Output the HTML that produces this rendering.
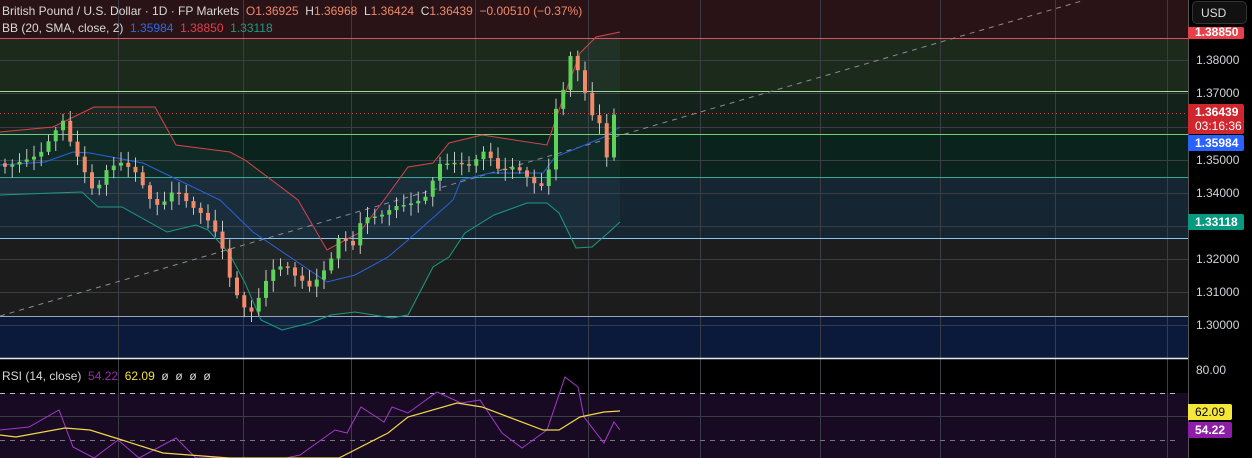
<!DOCTYPE html>
<html><head><meta charset="utf-8"><style>
html,body{margin:0;padding:0;background:#000;overflow:hidden}
body{width:1252px;height:458px;position:relative;font-family:"Liberation Sans",sans-serif}
svg{position:absolute;left:0;top:0}
.t{position:absolute;font-size:12px;color:#d8d8d8;white-space:nowrap}
.ax{position:absolute;left:1196px;font-size:12px;color:#d1d4dc}
.box{position:absolute;left:1188px;width:56px;height:16px;font-size:12px;color:#fff;text-align:left;padding-left:7px;box-sizing:border-box;line-height:16px;border-radius:0 2px 2px 0;font-weight:bold}
</style></head><body>
<svg id="s" width="1252" height="458" xmlns="http://www.w3.org/2000/svg">
<rect x="0" y="0" width="1188" height="38" fill="#2a1317"/>
<rect x="0" y="38" width="1188" height="53" fill="#1c2a1c"/>
<rect x="0" y="91" width="1188" height="43" fill="#13221a"/>
<rect x="0" y="134" width="1188" height="43" fill="#0b231d"/>
<rect x="0" y="177" width="1188" height="61" fill="#162532"/>
<rect x="0" y="238" width="1188" height="78" fill="#1c1c1d"/>
<rect x="0" y="316" width="1188" height="42" fill="#0b1a3a"/>
<rect x="0" y="360" width="1188" height="33" fill="#000"/>
<rect x="0" y="393" width="1188" height="65" fill="#170a22"/>
<rect x="1188" y="0" width="64" height="458" fill="#000"/>
<g id="grid" stroke="#3a3d44" stroke-width="1"></g>
<line x1="0" y1="38.5" x2="1188" y2="38.5" stroke="#e0505a"/>
<line x1="0" y1="91.5" x2="1188" y2="91.5" stroke="#9fe28a"/>
<line x1="0" y1="134.5" x2="1188" y2="134.5" stroke="#6ed27a"/>
<line x1="0" y1="177.5" x2="1188" y2="177.5" stroke="#3aa890"/>
<line x1="0" y1="238.5" x2="1188" y2="238.5" stroke="#8ec4f0"/>
<line x1="0" y1="316.5" x2="1188" y2="316.5" stroke="#a0a4ac"/>
<line x1="0" y1="113.5" x2="1188" y2="113.5" stroke="#e04040" stroke-dasharray="1,3"/>
<line x1="0" y1="316" x2="1085" y2="0" stroke="#8a8d94" stroke-dasharray="5,5"/>
<line x1="0" y1="358.5" x2="1188" y2="358.5" stroke="#e8e8e8" stroke-width="1.5"/>
<line x1="0" y1="393.5" x2="1180" y2="393.5" stroke="#bbb" stroke-dasharray="5,5"/>
<line x1="0" y1="440.5" x2="1180" y2="440.5" stroke="#777" stroke-dasharray="5,5"/>
<line x1="1188.5" y1="0" x2="1188.5" y2="458" stroke="#555"/>
<g id="g"></g>
</svg>
<div class="t" style="left:2px;top:4px">British Pound / U.S. Dollar · 1D · FP Markets &nbsp;<span style="color:#f08a6a">O</span><span style="color:#f08a6a">1.36925</span> &nbsp;H<span style="color:#f08a6a">1.36968</span> &nbsp;L<span style="color:#f08a6a">1.36424</span> &nbsp;C<span style="color:#f08a6a">1.36439</span> &nbsp;<span style="color:#f08a6a">−0.00510 (−0.37%)</span></div>
<div class="t" style="left:2px;top:21px">BB (20, SMA, close, 2) &nbsp;<span style="color:#2f6be0">1.35984</span> &nbsp;<span style="color:#e0404a">1.38850</span> &nbsp;<span style="color:#1a9c80">1.33118</span></div>
<div class="t" style="left:2px;top:369px">RSI (14, close) &nbsp;<span style="color:#9c27b0">54.22</span> &nbsp;<span style="color:#f5e03a">62.09</span> &nbsp;ø &nbsp;ø &nbsp;ø &nbsp;ø</div>
<div style="position:absolute;left:1192px;top:1px;width:55px;height:23px;border:1px solid #333;border-radius:5px;background:#111;color:#ddd;font-size:12px;line-height:23px;box-sizing:border-box;padding-left:8px">USD</div>
<div class="box" style="top:27px;height:12px;line-height:10px;background:#e8404a;overflow:hidden">1.38850</div>
<div class="ax" style="top:53px">1.38000</div>
<div class="ax" style="top:86px">1.37000</div>
<div class="box" style="top:104px;height:30px;background:#d0262e;line-height:14px;padding-top:1px">1.36439<br><span style="font-weight:normal">03:16:36</span></div>
<div class="box" style="top:135px;background:#2962ff">1.35984</div>
<div class="ax" style="top:153px">1.35000</div>
<div class="ax" style="top:186px">1.34000</div>
<div class="box" style="top:214px;background:#089981">1.33118</div>
<div class="ax" style="top:252px">1.32000</div>
<div class="ax" style="top:285px">1.31000</div>
<div class="ax" style="top:318px">1.30000</div>
<div class="ax" style="top:363px">80.00</div>
<div class="box" style="top:404px;width:44px;background:#f5e63a;color:#000;font-weight:normal">62.09</div>
<div class="box" style="top:422px;width:44px;background:#8e1ea8">54.22</div>
<script>
var NS="http://www.w3.org/2000/svg",g=document.getElementById('g'),gr=document.getElementById('grid');
function el(p,t,a){var e=document.createElementNS(NS,t);for(var k in a)e.setAttribute(k,a[k]);p.appendChild(e);return e}
[118,243,351,475,588,700,820,940,1055,1167].forEach(function(x){el(gr,'line',{x1:x+.5,y1:0,x2:x+.5,y2:458})});
[60,93,127,160,193,226,259,292,325,416].forEach(function(y){el(gr,'line',{x1:0,y1:y+.5,x2:1188,y2:y+.5})});
function pl(pts){return pts.map(function(p){return p[0]+','+p[1]}).join(' ')}
var up=[[0,132],[53,127],[94,107],[155,107],[176,145],[230,152],[245,160],[298,200],[327,250],[351,237],[359,233],[384,200],[408,167],[433,163],[449,143],[482,135],[547,145],[559,110],[580,53],[596,37],[620,32]];
var lo=[[0,195],[53,193],[82,192],[98,207],[122,207],[167,232],[196,225],[208,230],[229,253],[245,283],[261,320],[282,330],[310,323],[331,315],[355,312],[392,318],[408,315],[433,267],[449,257],[465,233],[494,215],[527,203],[547,203],[559,213],[576,248],[592,247],[608,233],[620,222]];
var mid=[[0,165],[45,162],[73,152],[90,153],[143,163],[220,200],[253,232],[327,282],[355,275],[388,257],[408,240],[453,200],[461,180],[490,173],[543,173],[555,157],[580,147],[604,137],[620,127]];
el(g,'polygon',{points:pl(up.concat(lo.slice().reverse())),fill:'rgba(90,150,170,0.07)'});
el(g,'polyline',{points:pl(up),fill:'none',stroke:'#d8444c','stroke-width':1});
el(g,'polyline',{points:pl(lo),fill:'none',stroke:'#1a9c80','stroke-width':1});
el(g,'polyline',{points:pl(mid),fill:'none',stroke:'#2a62e0','stroke-width':1});
var K=[[5,160],[20,150],[40,140],[55,120],[63,112],[70,135],[80,160],[95,200],[105,180],[120,175],[135,185],[150,210],[160,215],[175,190],[190,200],[205,205],[220,225],[230,265],[240,290],[250,305],[260,290],[270,270],[285,270],[295,285],[310,300],[320,290],[330,275],[340,245],[352,255],[362,220],[380,210],[395,195],[410,190],[425,185],[440,155],[455,160],[470,170],[485,160],[500,185],[515,180],[530,190],[540,195],[548,180],[555,110],[562,100],[567,45],[575,55],[582,70],[590,100],[600,110],[607,145],[613,100],[620,113]];
function f(x){for(var i=0;i<K.length-1;i++){if(x<=K[i+1][0]){var a=K[i],b=K[i+1];return a[1]+(b[1]-a[1])*(x-a[0])/(b[0]-a[0])}}return K[K.length-1][1]}
var prev=f(0);
for(var x=5;x<=621;x+=7.25){var c=f(x)+Math.sin(x*1.7)*10+Math.cos(x*0.9)*6;if(x>618)c=113;var o=prev;if(x>618)o=97;
var t=Math.min(o,c),b=Math.max(o,c);if(b-t<1.5)b=t+1.5;var col=c<o?'#5dd35a':'#f38a6b';
var w1=t-3-Math.abs(Math.sin(x*3.1))*8,w2=b+3+Math.abs(Math.cos(x*2.3))*8;
el(g,'line',{x1:x,y1:w1,x2:x,y2:w2,stroke:'#c8c8c8','stroke-width':1});
el(g,'rect',{x:x-2,y:t,width:4,height:b-t,fill:col});prev=c;}
var rsi=[[0,430],[29,427],[59,410],[73,447],[94,458],[118,440],[139,458],[176,438],[196,458],[286,458],[300,455],[335,430],[347,433],[361,407],[384,422],[392,407],[408,413],[437,392],[461,403],[480,400],[502,433],[522,448],[547,430],[565,377],[578,387],[584,417],[604,443],[614,422],[620,430]];
var ma=[[0,435],[16,437],[65,428],[90,430],[122,440],[163,453],[229,458],[339,458],[388,433],[408,417],[457,403],[482,407],[543,430],[559,430],[580,417],[604,412],[620,411]];
el(g,'polyline',{points:pl(rsi),fill:'none',stroke:'#a23bc8','stroke-width':1});
el(g,'polyline',{points:pl(ma),fill:'none',stroke:'#f0d848','stroke-width':1.2});
</script>
</body></html>
